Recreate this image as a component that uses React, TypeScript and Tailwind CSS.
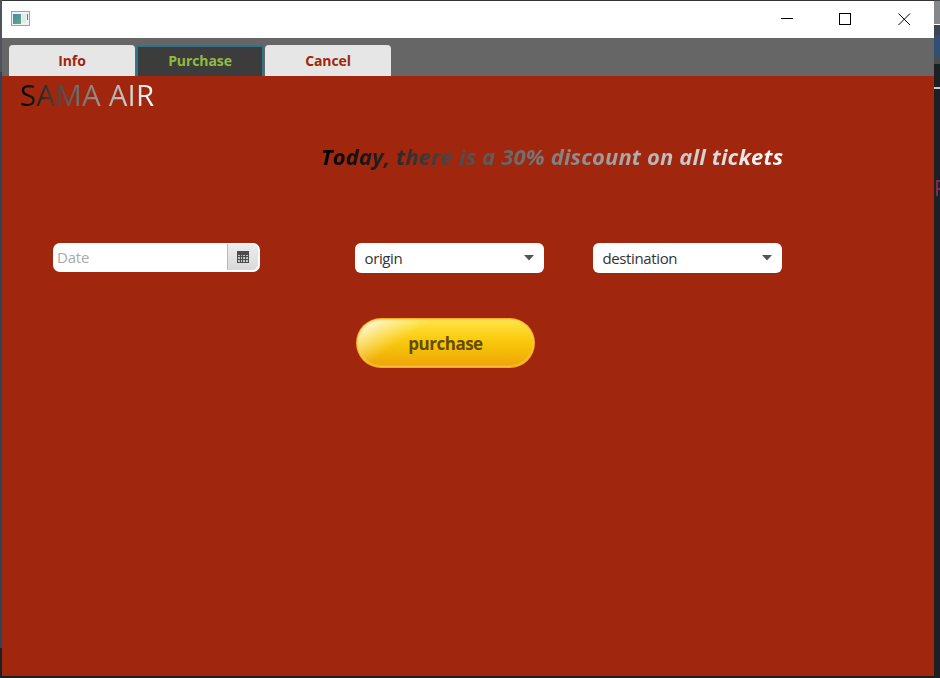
import React from "react";

function TitleBar() {
  return (
    <header className="flex h-[37px] shrink-0 items-start bg-white pl-[9px] pr-[23px]">
      <svg className="mt-[10px]" width="19" height="15" viewBox="0 0 19 15">
        <defs>
          <linearGradient id="pane" x1="0" y1="0" x2="1" y2="1">
            <stop offset="0" stopColor="#4f86a6" />
            <stop offset="1" stopColor="#55b08a" />
          </linearGradient>
        </defs>
        <rect x="0.5" y="0.5" width="18" height="14" fill="#f1f3f3" stroke="#9aa5aa" />
        <rect x="2" y="3" width="8" height="10" fill="url(#pane)" />
        <path d="M11 3h4v9h-4z" fill="#e3e8ea" />
        <path d="M16.5 3v6" stroke="#4b8a80" />
      </svg>
      <div className="ml-auto flex">
        <svg className="mt-[10px]" width="130" height="14" viewBox="0 0 130 14" fill="none" stroke="#000">
          <path d="M0 7.5h12" />
          <rect x="58.5" y="2.5" width="11" height="11" />
          <path d="M117.5 2.5l11.5 11.5M129 2.5L117.5 14" />
        </svg>
      </div>
    </header>
  );
}

function Tab({ label, active }: { label: string; active?: boolean }) {
  return (
    <button
      className={
        active
          ? "flex h-[31px] w-[128px] -mx-px justify-center rounded-t-[3px] border-2 border-b-0 border-[#2b7391] bg-[#3c3c3c] pt-[3px] text-[#8fbc3f]"
          : "flex h-[31px] w-[126px] justify-center rounded-t-[4px] bg-[#e6e6e6] pt-[5px] text-[#a0260e]"
      }
    >
      <span className="text-[14px] font-bold leading-[22px] tracking-[-0.1px]">{label}</span>
    </button>
  );
}

function Combo({ label }: { label: string }) {
  return (
    <div className="flex h-[30px] w-[189px] items-center justify-between rounded-[6px] bg-white pl-[9.5px] pr-[10px] text-[15px] text-[#333]">
      <span className="tracking-[-0.38px]">{label}</span>
      <svg width="10" height="6" viewBox="0 0 10 6">
        <path d="M0 0h10L5 5.5z" fill="#555" />
      </svg>
    </div>
  );
}

function CalendarIcon() {
  return (
    <svg width="12" height="12" viewBox="0 0 12 12">
      <path d="M0 0h12v12H0z" fill="#4c4c4c" />
      <path
        d="M1 4h2v1H1zM4 4h1v1H4zM6 4h2v1H6zM9 4h2v1H9zM1 6h2v2H1zM4 6h1v2H4zM6 6h2v2H6zM9 6h2v2H9zM1 9h2v2H1zM4 9h1v2H4zM6 9h2v2H6zM9 9h2v2H9z"
        fill="#c4c4c4"
      />
    </svg>
  );
}

export default function App() {
  return (
    <div className="flex h-[678px] w-[940px] overflow-hidden bg-[#1d2022] font-['Open_Sans','Noto_Sans',sans-serif]">
      <div className="flex w-[2px] shrink-0 flex-col">
        <div className="h-[72px] bg-[#50545a]" />
        <div className="h-[576px] bg-[#29465c]" />
      </div>
      <main className="flex h-[677px] w-[932px] shrink-0 flex-col border-t border-[#333]">
        <TitleBar />
        <nav className="flex h-[38px] shrink-0 items-end gap-[2px] bg-[#666] pl-[7px]">
          <Tab label="Info" />
          <Tab label="Purchase" active />
          <Tab label="Cancel" />
        </nav>
        <section className="flex h-[600px] flex-col items-start bg-[#a0260e]">
          <h1 className="ml-[18px] h-[37px] w-fit whitespace-nowrap bg-linear-to-r/srgb from-black to-white bg-clip-text text-[29.5px] leading-[37px] tracking-[0.2px] text-transparent">
            SAMA AIR
          </h1>
          <p className="ml-[319px] mt-[27px] h-[32px] w-fit whitespace-nowrap bg-linear-to-r/srgb from-black to-white bg-clip-text text-[22px] font-bold italic leading-[32px] tracking-[0.16px] text-transparent">
            Today, there is a 30% discount on all tickets
          </p>
          <div className="ml-[51px] mt-[71px] flex h-[30px] items-start">
            <div className="flex h-[29px] w-[207px] overflow-hidden rounded-[7px] bg-white">
              <span className="w-[174px] pl-[4px] text-[15px] leading-[29px] tracking-[-0.2px] text-[#aaa]">Date</span>
              <div className="mt-[1px] flex h-[26px] w-[31px] items-center justify-center rounded-r-[6px] border-l border-[#b9b9b9] bg-linear-to-b from-[#eee] to-[#d9d9d9]">
                <CalendarIcon />
              </div>
            </div>
            <div className="ml-[95px] flex gap-[49px]">
              <Combo label="origin" />
              <Combo label="destination" />
            </div>
          </div>
          <button className="ml-[354px] mt-[45px] flex h-[50px] w-[179px] items-center justify-center rounded-[25px] bg-linear-to-b from-[#ffab1b] to-[#f5a623] p-[1px]">
            <span className="flex h-full w-full items-center justify-center rounded-[24px] bg-[linear-gradient(145deg,rgba(255,255,255,0.75)_6%,rgba(255,255,255,0.3)_20%,rgba(255,255,255,0)_31%),linear-gradient(to_bottom,#ffe64c_0%,#fbcf15_35%,#f5bd05_65%,#efa30c_100%)] pt-[2px] text-[17px] font-bold tracking-[-0.5px] text-[#654b00] shadow-[inset_0_0_2px_1px_rgba(255,205,95,0.8)]">
              purchase
            </span>
          </button>
        </section>
      </main>
      <aside className="flex w-[6px] flex-col overflow-hidden bg-[#1d2022]">
        <div className="h-[24px] border-t border-[#444] bg-[#85888a]" />
        <div className="h-[1px] bg-white" />
        <div className="h-[10px] bg-[#3b4650]" />
        <div className="h-[22px] bg-[#31506f]" />
        <div className="h-[7px] bg-[#4a4a4a]" />
        <div className="mt-[23px] h-[2px] bg-[#ccc]" />
        <svg className="ml-[2px] mt-[91px]" width="4" height="16" viewBox="0 0 4 16" fill="none" stroke="#a32a5c">
          <path d="M1 0v16M1 1h3M1 9h3" strokeWidth="1.5" />
        </svg>
      </aside>
    </div>
  );
}
